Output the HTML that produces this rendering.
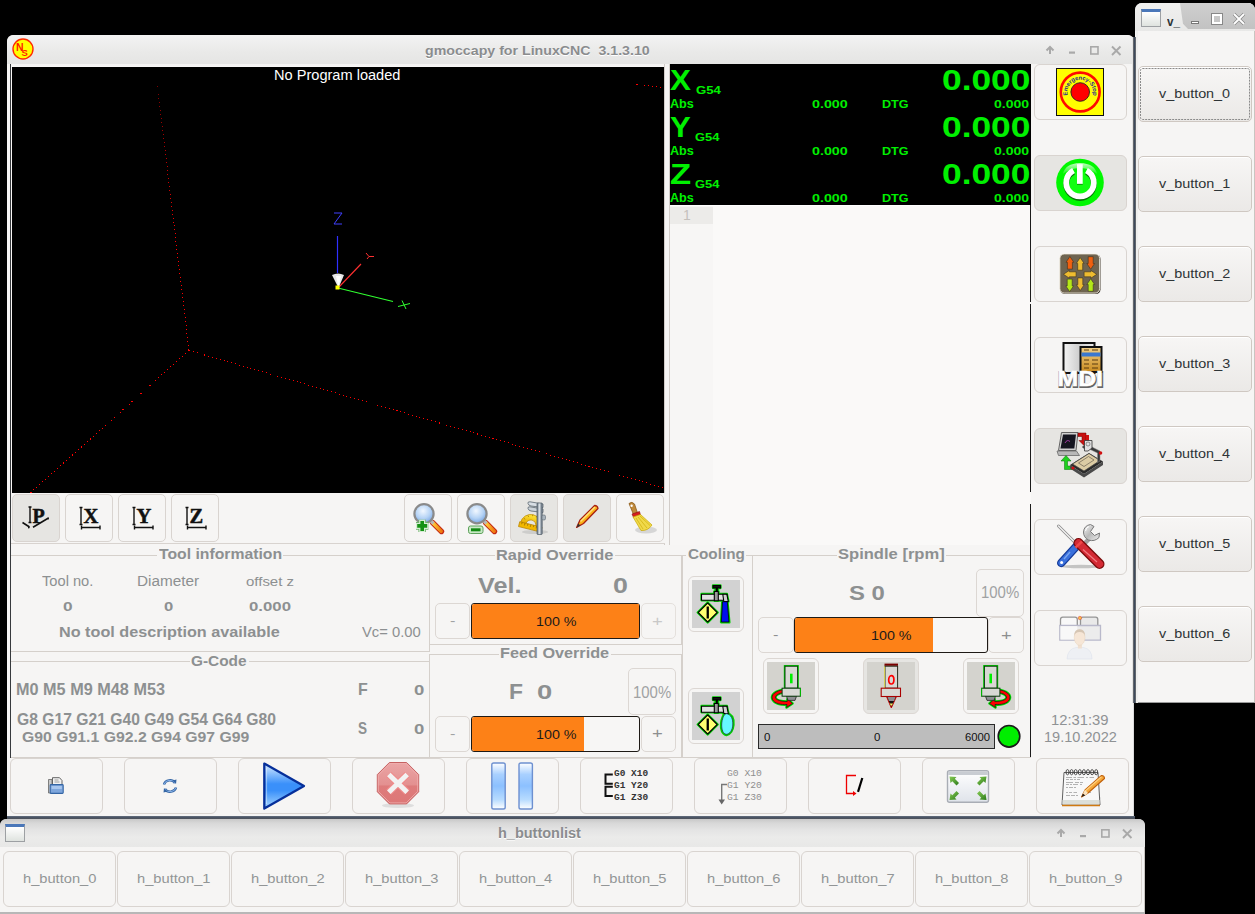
<!DOCTYPE html><html><head><meta charset="utf-8"><style>
html,body{margin:0;padding:0;width:1255px;height:914px;overflow:hidden;background:#000;position:relative;font-family:"Liberation Sans", sans-serif;}
div{box-sizing:border-box;}
.t{position:absolute;white-space:pre;transform-origin:0 0;}
svg{position:absolute;overflow:visible;}
</style></head><body>
<div style="position:absolute;left:1135px;top:3px;width:120px;height:700px;background:#f6f5f4;border-radius:7px 7px 0 0;border-right:1px solid #c9c5c1;border-bottom:1px solid #9a9a9a;"></div>
<div style="position:absolute;left:1135px;top:3px;width:120px;height:28px;background:linear-gradient(#f0f0ef,#e8e8e7);border-radius:7px 7px 0 0;"></div>
<div style="position:absolute;left:1180px;top:3px;width:75px;height:26px;background:linear-gradient(#cfcfcf,#c2c2c2);border-radius:0 7px 0 0;clip-path:polygon(0 0,100% 0,100% 100%,8px 100%,3px 80%);"></div>
<div style="position:absolute;left:1141px;top:9px;width:20px;height:18px;background:linear-gradient(#ffffff,#dfe3df);border:1px solid #9da0a3;border-top:3px solid #4a77b9;"></div>
<div class="t" style="left:1166.94px;top:16px;font-size:12.25px;line-height:12.25px;font-family:'Liberation Sans', sans-serif;font-weight:bold;color:#2e3436;transform:scaleX(0.9518);">v_</div>
<div style="position:absolute;left:1191px;top:21px;width:8px;height:3px;background:#fff;border:1px solid #777;"></div>
<div style="position:absolute;left:1212px;top:14px;width:10px;height:10px;border:2px solid #fff;outline:1px solid #888;"></div>
<svg style="left:1233px;top:13px" width="12" height="12"><path d="M1 1L11 11M11 1L1 11" stroke="#888" stroke-width="3.2"/><path d="M1 1L11 11M11 1L1 11" stroke="#fff" stroke-width="1.8"/></svg>
<div style="position:absolute;left:1138px;top:66px;width:114px;height:56px;background:linear-gradient(#f7f6f5,#ebe9e7);border:1px solid #cfc8c2;border-radius:5px;box-shadow:0 1px 0 #fff inset;"></div>
<div class="t" style="left:1159.46px;top:88px;font-size:12.75px;line-height:12.75px;font-family:'Liberation Sans', sans-serif;font-weight:normal;color:#2e3436;transform:scaleX(1.1267);">v_button_0</div>
<div style="position:absolute;left:1138px;top:156px;width:114px;height:56px;background:linear-gradient(#f7f6f5,#ebe9e7);border:1px solid #cfc8c2;border-radius:5px;box-shadow:0 1px 0 #fff inset;"></div>
<div class="t" style="left:1159.46px;top:178px;font-size:12.75px;line-height:12.75px;font-family:'Liberation Sans', sans-serif;font-weight:normal;color:#2e3436;transform:scaleX(1.1290);">v_button_1</div>
<div style="position:absolute;left:1138px;top:246px;width:114px;height:56px;background:linear-gradient(#f7f6f5,#ebe9e7);border:1px solid #cfc8c2;border-radius:5px;box-shadow:0 1px 0 #fff inset;"></div>
<div class="t" style="left:1159.46px;top:268px;font-size:12.75px;line-height:12.75px;font-family:'Liberation Sans', sans-serif;font-weight:normal;color:#2e3436;transform:scaleX(1.1296);">v_button_2</div>
<div style="position:absolute;left:1138px;top:336px;width:114px;height:56px;background:linear-gradient(#f7f6f5,#ebe9e7);border:1px solid #cfc8c2;border-radius:5px;box-shadow:0 1px 0 #fff inset;"></div>
<div class="t" style="left:1159.46px;top:358px;font-size:12.75px;line-height:12.75px;font-family:'Liberation Sans', sans-serif;font-weight:normal;color:#2e3436;transform:scaleX(1.1279);">v_button_3</div>
<div style="position:absolute;left:1138px;top:426px;width:114px;height:56px;background:linear-gradient(#f7f6f5,#ebe9e7);border:1px solid #cfc8c2;border-radius:5px;box-shadow:0 1px 0 #fff inset;"></div>
<div class="t" style="left:1159.46px;top:448px;font-size:12.75px;line-height:12.75px;font-family:'Liberation Sans', sans-serif;font-weight:normal;color:#2e3436;transform:scaleX(1.1244);">v_button_4</div>
<div style="position:absolute;left:1138px;top:516px;width:114px;height:56px;background:linear-gradient(#f7f6f5,#ebe9e7);border:1px solid #cfc8c2;border-radius:5px;box-shadow:0 1px 0 #fff inset;"></div>
<div class="t" style="left:1159.46px;top:538px;font-size:12.75px;line-height:12.75px;font-family:'Liberation Sans', sans-serif;font-weight:normal;color:#2e3436;transform:scaleX(1.1273);">v_button_5</div>
<div style="position:absolute;left:1138px;top:606px;width:114px;height:56px;background:linear-gradient(#f7f6f5,#ebe9e7);border:1px solid #cfc8c2;border-radius:5px;box-shadow:0 1px 0 #fff inset;"></div>
<div class="t" style="left:1159.46px;top:628px;font-size:12.75px;line-height:12.75px;font-family:'Liberation Sans', sans-serif;font-weight:normal;color:#2e3436;transform:scaleX(1.1279);">v_button_6</div>
<svg style="left:1138px;top:66px" width="114" height="56"><rect x="2.5" y="2.5" width="109" height="51" rx="2" fill="none" stroke="#8a8a8a" stroke-width="1" stroke-dasharray="2 1"/></svg>
<div style="position:absolute;left:7px;top:35px;width:1127px;height:784px;background:#f6f5f4;border-radius:7px 7px 0 0;"></div>
<div style="position:absolute;left:7px;top:35px;width:1127px;height:29px;background:linear-gradient(#f3f3f3,#e9e9e8 60%,#e5e5e4);border-radius:6px 6px 0 0;"></div>
<div style="position:absolute;left:7px;top:64px;width:1127px;height:2px;background:#f5f4f3;"></div>
<div style="position:absolute;left:1132px;top:37px;width:1px;height:666px;background:#e3e3e2;"></div>
<div style="position:absolute;left:1133px;top:37px;width:3px;height:666px;background:linear-gradient(90deg,#63666c 0,#63666c 33%,#3d4a5c 33%,#3d4a5c 66%,#62666c 66%);"></div>
<div style="position:absolute;left:1136px;top:31px;width:2px;height:672px;background:#efefee;"></div>
<div style="position:absolute;left:1133px;top:703px;width:1px;height:115px;background:#dcdcdc;"></div>
<div style="position:absolute;left:7px;top:816px;width:1128px;height:3px;background:linear-gradient(#6a7280,#4a5668 40%,#4e5158);"></div>
<div class="t" style="left:424.83px;top:44px;font-size:13.50px;line-height:13.50px;font-family:'Liberation Sans', sans-serif;font-weight:bold;color:#8a8c8e;transform:scaleX(1.0511);text-shadow:0 1px 0 #fff;">gmoccapy for LinuxCNC  3.1.3.10</div>
<svg style="left:12px;top:38px" width="22" height="22"><circle cx="11" cy="11" r="10" fill="#ffff00" stroke="#ff2a00" stroke-width="1.4"/><text x="4" y="13.2" font-family="Liberation Sans" font-weight="bold" font-size="10.5" fill="#ff1a00">N</text><text x="9.4" y="17.8" font-family="Liberation Sans" font-weight="bold" font-size="9.5" fill="#ff1a00">S</text></svg>
<svg style="left:1045px;top:45px" width="80" height="12"><path d="M5 9V2M1.5 5.5L5 2L8.5 5.5" stroke="#a9a9a9" stroke-width="2" fill="none"/><rect x="24" y="6.5" width="6" height="2.2" fill="#a9a9a9"/><rect x="45.8" y="1.8" width="7.2" height="7.2" stroke="#a9a9a9" stroke-width="1.6" fill="none"/><path d="M67 1.5L75.5 10M75.5 1.5L67 10" stroke="#a9a9a9" stroke-width="1.9"/></svg>
<div style="position:absolute;left:10px;top:64px;width:1px;height:694px;background:#373a3d;"></div>
<div style="position:absolute;left:11px;top:66px;width:654px;height:428px;background:#f8f7f6;"></div>
<div style="position:absolute;left:12px;top:67px;width:652px;height:426px;background:#000;"></div>
<div style="position:absolute;left:664px;top:64px;width:1px;height:481px;background:#d2cdc9;"></div>
<div style="position:absolute;left:669px;top:64px;width:1px;height:481px;background:#d2cdc9;"></div>
<svg style="left:12px;top:67px" width="652" height="426" viewBox="12 67 652 426"><defs><linearGradient id="fogv" x1="0" y1="86" x2="0" y2="350" gradientUnits="userSpaceOnUse"><stop offset="0" stop-color="#7a0000"/><stop offset="0.6" stop-color="#ff0000"/></linearGradient></defs><path d="M157.5 86.5L189 350.5" stroke="url(#fogv)" stroke-width="1" stroke-dasharray="1 3" fill="none" shape-rendering="crispEdges"/><path d="M189 350.5L28 495" stroke="#ff0000" stroke-width="1" stroke-dasharray="1 3" fill="none" shape-rendering="crispEdges"/><path d="M189 350.5L664 488" stroke="#ff0000" stroke-width="1" stroke-dasharray="1 3" fill="none" shape-rendering="crispEdges"/><path d="M636.5 84.5L664 87.5" stroke="#ff0000" stroke-width="1" stroke-dasharray="1 3" fill="none" shape-rendering="crispEdges"/><path d="M337.5 236V273" stroke="#3030ff" stroke-width="1.2"/><path d="M338 288L361 264" stroke="#ff3030" stroke-width="1.1"/><path d="M338 288L393 301.5" stroke="#30ff30" stroke-width="1.2"/><path d="M334 213H342L334 224H342" stroke="#4040ff" stroke-width="1" fill="none"/><path d="M366 253L369 256.5L367 259M369 256.5H374" stroke="#ff3030" stroke-width="1" fill="none"/><path d="M398 306.5L410 303.5M402 300.5L406 309" stroke="#30ff30" stroke-width="1" fill="none"/><path d="M332 275Q338 272 344 275L338.5 288Z" fill="#e8e8e8"/><path d="M336 276L338.5 288L341 276Z" fill="#ffffff"/><rect x="335.5" y="285.5" width="4" height="4" fill="#ffff00"/></svg>
<div class="t" style="left:274.40px;top:68px;font-size:14.00px;line-height:14.00px;font-family:'Liberation Sans', sans-serif;font-weight:normal;color:#ffffff;transform:scaleX(1.0415);">No Program loaded</div>
<div style="position:absolute;left:11px;top:493px;width:654px;height:51px;background:#f6f5f4;border-bottom:1px solid #d8d3cf;"></div>
<div style="position:absolute;left:12px;top:494px;width:48px;height:48px;background:#e6e5e2;border:1px solid #d9d4d0;border-radius:5px;"></div>
<div style="position:absolute;left:65px;top:494px;width:48px;height:48px;background:#f6f5f4;border:1px solid #d9d4d0;border-radius:5px;"></div>
<div style="position:absolute;left:118px;top:494px;width:48px;height:48px;background:#f6f5f4;border:1px solid #d9d4d0;border-radius:5px;"></div>
<div style="position:absolute;left:171px;top:494px;width:48px;height:48px;background:#f6f5f4;border:1px solid #d9d4d0;border-radius:5px;"></div>
<div style="position:absolute;left:404px;top:494px;width:48px;height:48px;background:#f6f5f4;border:1px solid #d9d4d0;border-radius:5px;"></div>
<div style="position:absolute;left:457px;top:494px;width:48px;height:48px;background:#f6f5f4;border:1px solid #d9d4d0;border-radius:5px;"></div>
<div style="position:absolute;left:510px;top:494px;width:48px;height:48px;background:#e6e5e2;border:1px solid #d9d4d0;border-radius:5px;"></div>
<div style="position:absolute;left:563px;top:494px;width:48px;height:48px;background:#e6e5e2;border:1px solid #d9d4d0;border-radius:5px;"></div>
<div style="position:absolute;left:616px;top:494px;width:48px;height:48px;background:#f6f5f4;border:1px solid #d9d4d0;border-radius:5px;"></div>
<svg style="left:12px;top:494px" width="48" height="48"><path d="M16.5 13H19.5M18 13V28.5M16.5 28.5H19.5" stroke="#111" stroke-width="1.4" fill="none"/><path d="M10.5 28.5L17.5 33M21 33.2L36.5 24" stroke="#111" stroke-width="1.6" fill="none"/><path d="M16 31.5L18 34L16 34.5Z M36.5 23L37 25.5L35 25Z" fill="#111"/><text x="20.5" y="29" font-family="'Liberation Serif', serif" font-weight="bold" font-size="20" fill="#111" stroke="#111" stroke-width="0.5">P</text></svg>
<svg style="left:65px;top:494px" width="48" height="48"><path d="M14.5 13.5H17.5M16 13.5V30.5M14.5 30.5H17.5" stroke="#111" stroke-width="1.4" fill="none"/><path d="M16.5 33.5H35M16.5 31.5V35.5M35 31.5V35.5" stroke="#111" stroke-width="1.4" fill="none"/><text x="18.6" y="29.3" font-family="'Liberation Serif', serif" font-weight="bold" font-size="20.5" fill="#111" stroke="#111" stroke-width="0.5">X</text></svg>
<svg style="left:118px;top:494px" width="48" height="48"><path d="M14.5 13.5H17.5M16 13.5V30.5M14.5 30.5H17.5" stroke="#111" stroke-width="1.4" fill="none"/><path d="M16.5 33.5H35M16.5 31.5V35.5M35 31.5V35.5" stroke="#111" stroke-width="1.4" fill="none"/><text x="18.6" y="29.3" font-family="'Liberation Serif', serif" font-weight="bold" font-size="20.5" fill="#111" stroke="#111" stroke-width="0.5">Y</text></svg>
<svg style="left:171px;top:494px" width="48" height="48"><path d="M14.5 13.5H17.5M16 13.5V30.5M14.5 30.5H17.5" stroke="#111" stroke-width="1.4" fill="none"/><path d="M16.5 33.5H35M16.5 31.5V35.5M35 31.5V35.5" stroke="#111" stroke-width="1.4" fill="none"/><text x="18.6" y="29.3" font-family="'Liberation Serif', serif" font-weight="bold" font-size="20.5" fill="#111" stroke="#111" stroke-width="0.5">Z</text></svg>
<svg style="left:404px;top:494px" width="48" height="48"><defs><radialGradient id="lens404" cx="0.45" cy="0.35" r="0.7"><stop offset="0" stop-color="#f2f8ff"/><stop offset="0.55" stop-color="#b5d3f5"/><stop offset="1" stop-color="#6d9ee0"/></radialGradient><linearGradient id="hdl404" x1="0" y1="0" x2="1" y2="0"><stop offset="0" stop-color="#ffd23a"/><stop offset="1" stop-color="#f07a10"/></linearGradient></defs><path d="M28.5 28.5L37.5 37.5" stroke="#c42a12" stroke-width="5.4" stroke-linecap="round"/><path d="M28.8 28.8L37.2 37.2" stroke="url(#hdl404)" stroke-width="3.4" stroke-linecap="round"/><path d="M26 26L29.5 29.5" stroke="#b8b8b8" stroke-width="3.2"/><circle cx="20" cy="19.8" r="9.6" fill="url(#lens404)" stroke="#8a8a8a" stroke-width="2.2"/><path d="M12 31.9H24.4M18.2 25.7V38.1" stroke="#6fb56c" stroke-width="7.6"/><path d="M12 31.9H24.4M18.2 25.7V38.1" stroke="#d5ecd3" stroke-width="6"/><path d="M13.2 31.9H23.2M18.2 26.9V36.9" stroke="#149214" stroke-width="3.6"/></svg>
<svg style="left:457px;top:494px" width="48" height="48"><defs><radialGradient id="lens457" cx="0.45" cy="0.35" r="0.7"><stop offset="0" stop-color="#f2f8ff"/><stop offset="0.55" stop-color="#b5d3f5"/><stop offset="1" stop-color="#6d9ee0"/></radialGradient><linearGradient id="hdl457" x1="0" y1="0" x2="1" y2="0"><stop offset="0" stop-color="#ffd23a"/><stop offset="1" stop-color="#f07a10"/></linearGradient></defs><path d="M28.5 28.5L37.5 37.5" stroke="#c42a12" stroke-width="5.4" stroke-linecap="round"/><path d="M28.8 28.8L37.2 37.2" stroke="url(#hdl457)" stroke-width="3.4" stroke-linecap="round"/><path d="M26 26L29.5 29.5" stroke="#b8b8b8" stroke-width="3.2"/><circle cx="20" cy="19.8" r="9.6" fill="url(#lens457)" stroke="#8a8a8a" stroke-width="2.2"/><rect x="11.5" y="32" width="14.5" height="7.5" rx="2" fill="#c9e8c6" stroke="#5ea35c" stroke-width="1"/><rect x="14" y="34.3" width="9.5" height="3" fill="#138a13"/></svg>
<svg style="left:510px;top:494px" width="48" height="48"><defs><linearGradient id="msy" x1="0" y1="0" x2="0" y2="1"><stop offset="0" stop-color="#ffe83a"/><stop offset="1" stop-color="#e6a800"/></linearGradient><linearGradient id="msg" x1="0" y1="0" x2="1" y2="0"><stop offset="0" stop-color="#5e6a76"/><stop offset="0.45" stop-color="#dfe5ea"/><stop offset="1" stop-color="#5e6a76"/></linearGradient></defs><ellipse cx="25" cy="38" rx="13" ry="2" fill="#bdbdbd" opacity="0.6"/><g transform="rotate(14 21 30)"><path d="M10.5 31A10.5 10.5 0 0 1 31.5 31H26A5 5 0 0 0 16 31Z" fill="url(#msy)" stroke="#c08c00" stroke-width="0.7"/><path d="M13 26L14 27M16 22.5L17 23.7M20.5 20.6L20.7 22M25 21L24.6 22.3M28.8 23.3L28 24.3" stroke="#a07000" stroke-width="0.7"/><rect x="9.5" y="30.5" width="23" height="5" fill="#f2b800" stroke="#b88400" stroke-width="0.7"/><path d="M12 30.5V32.5M15 30.5V33M18 30.5V32.5M21 30.5V33M24 30.5V32.5M27 30.5V33M30 30.5V32.5" stroke="#8a6000" stroke-width="0.6"/></g><path d="M18 9.5Q17.5 7.5 20 7.8L33 10V13.5L21 12Q18.5 11.5 18 9.5Z" fill="#d8dee4" stroke="#5a6670" stroke-width="0.8"/><path d="M18 14.5Q17.5 12.5 20 12.8L33 15V18.5L21 17Q18.5 16.5 18 14.5Z" fill="#ccd3d9" stroke="#5a6670" stroke-width="0.8"/><rect x="27" y="9" width="5.2" height="31.5" rx="0.8" fill="url(#msg)" stroke="#4e5a66" stroke-width="0.7"/><rect x="32" y="21" width="3.5" height="5" rx="1.5" fill="#a9b3bb" stroke="#5a6670" stroke-width="0.6"/></svg>
<svg style="left:563px;top:494px" width="48" height="48"><path d="M13.6 33.4L17 26L31.6 11.5Q34.5 11.5 35 14.5L20.5 29.5Z" fill="#fbb118" stroke="#a82010" stroke-width="1.3" stroke-linejoin="round"/><path d="M17.5 27.5L32 13" stroke="#ffe27a" stroke-width="1.5"/><path d="M13.6 33.4L15.3 29.6L17.4 31.6Z" fill="#333"/></svg>
<svg style="left:616px;top:494px" width="48" height="48"><ellipse cx="30" cy="36" rx="11" ry="3.5" fill="#c9c9c9" opacity="0.7"/><path d="M13 9.5Q16 7 18.5 10L21.5 19L17.5 20.5Z" fill="#c08a3a" stroke="#8b5a1a" stroke-width="0.8"/><circle cx="15.6" cy="11.8" r="1.2" fill="#fff"/><path d="M16 20L23.5 17.5L24.5 21L17.5 23.5Z" fill="#d41e1e" stroke="#8e0f0f" stroke-width="0.6"/><path d="M17 23L24.5 20.5L36 31Q32 37 25 36.5Z" fill="#f0d94a" stroke="#c9a700" stroke-width="0.7"/><path d="M20 24L27 35M22 23L31 34M24 22L34 31.5" stroke="#c9a700" stroke-width="0.6"/></svg>
<div style="position:absolute;left:670px;top:64px;width:361px;height:141px;background:#000;"></div>
<div class="t" style="left:670.29px;top:65px;font-size:29.75px;line-height:29.75px;font-family:'Liberation Sans', sans-serif;font-weight:bold;color:#00f000;transform:scaleX(1.0538);">X</div>
<div class="t" style="left:696.47px;top:84px;font-size:11.75px;line-height:11.75px;font-family:'Liberation Sans', sans-serif;font-weight:bold;color:#00f000;transform:scaleX(1.1209);">G54</div>
<div class="t" style="left:669.98px;top:98px;font-size:12.00px;line-height:12.00px;font-family:'Liberation Sans', sans-serif;font-weight:bold;color:#00f000;transform:scaleX(1.0517);">Abs</div>
<div class="t" style="left:942.39px;top:65px;font-size:29.50px;line-height:29.50px;font-family:'Liberation Sans', sans-serif;font-weight:bold;color:#00f000;transform:scaleX(1.1978);">0.000</div>
<div class="t" style="left:811.63px;top:99px;font-size:11.25px;line-height:11.25px;font-family:'Liberation Sans', sans-serif;font-weight:bold;color:#00f000;transform:scaleX(1.2696);">0.000</div>
<div class="t" style="left:882.45px;top:99px;font-size:11.50px;line-height:11.50px;font-family:'Liberation Sans', sans-serif;font-weight:bold;color:#00f000;transform:scaleX(1.0935);">DTG</div>
<div class="t" style="left:994.24px;top:99px;font-size:11.25px;line-height:11.25px;font-family:'Liberation Sans', sans-serif;font-weight:bold;color:#00f000;transform:scaleX(1.2476);">0.000</div>
<div class="t" style="left:670.05px;top:112px;font-size:29.75px;line-height:29.75px;font-family:'Liberation Sans', sans-serif;font-weight:bold;color:#00f000;transform:scaleX(1.0469);">Y</div>
<div class="t" style="left:695.18px;top:131px;font-size:11.75px;line-height:11.75px;font-family:'Liberation Sans', sans-serif;font-weight:bold;color:#00f000;transform:scaleX(1.1025);">G54</div>
<div class="t" style="left:669.98px;top:145px;font-size:12.00px;line-height:12.00px;font-family:'Liberation Sans', sans-serif;font-weight:bold;color:#00f000;transform:scaleX(1.0517);">Abs</div>
<div class="t" style="left:942.39px;top:112px;font-size:29.50px;line-height:29.50px;font-family:'Liberation Sans', sans-serif;font-weight:bold;color:#00f000;transform:scaleX(1.1978);">0.000</div>
<div class="t" style="left:811.63px;top:146px;font-size:11.25px;line-height:11.25px;font-family:'Liberation Sans', sans-serif;font-weight:bold;color:#00f000;transform:scaleX(1.2696);">0.000</div>
<div class="t" style="left:882.45px;top:146px;font-size:11.50px;line-height:11.50px;font-family:'Liberation Sans', sans-serif;font-weight:bold;color:#00f000;transform:scaleX(1.0935);">DTG</div>
<div class="t" style="left:994.24px;top:146px;font-size:11.25px;line-height:11.25px;font-family:'Liberation Sans', sans-serif;font-weight:bold;color:#00f000;transform:scaleX(1.2476);">0.000</div>
<div class="t" style="left:669.56px;top:159px;font-size:29.75px;line-height:29.75px;font-family:'Liberation Sans', sans-serif;font-weight:bold;color:#00f000;transform:scaleX(1.1620);">Z</div>
<div class="t" style="left:695.18px;top:178px;font-size:11.75px;line-height:11.75px;font-family:'Liberation Sans', sans-serif;font-weight:bold;color:#00f000;transform:scaleX(1.1025);">G54</div>
<div class="t" style="left:669.98px;top:192px;font-size:12.00px;line-height:12.00px;font-family:'Liberation Sans', sans-serif;font-weight:bold;color:#00f000;transform:scaleX(1.0517);">Abs</div>
<div class="t" style="left:942.39px;top:159px;font-size:29.50px;line-height:29.50px;font-family:'Liberation Sans', sans-serif;font-weight:bold;color:#00f000;transform:scaleX(1.1978);">0.000</div>
<div class="t" style="left:811.63px;top:193px;font-size:11.25px;line-height:11.25px;font-family:'Liberation Sans', sans-serif;font-weight:bold;color:#00f000;transform:scaleX(1.2696);">0.000</div>
<div class="t" style="left:882.45px;top:193px;font-size:11.50px;line-height:11.50px;font-family:'Liberation Sans', sans-serif;font-weight:bold;color:#00f000;transform:scaleX(1.0935);">DTG</div>
<div class="t" style="left:994.24px;top:193px;font-size:11.25px;line-height:11.25px;font-family:'Liberation Sans', sans-serif;font-weight:bold;color:#00f000;transform:scaleX(1.2476);">0.000</div>
<div style="position:absolute;left:670px;top:205px;width:361px;height:340px;background:#faf9f8;border-top:1px solid #ffffff;"></div>
<div style="position:absolute;left:670px;top:206px;width:43px;height:339px;background:#f7f6f5;"></div>
<div style="position:absolute;left:670px;top:207px;width:43px;height:17px;background:#ecebe9;"></div>
<div class="t" style="left:682.96px;top:208px;font-size:14.50px;line-height:14.50px;font-family:'Liberation Sans', sans-serif;font-weight:normal;color:#c4c0bc;transform:scaleX(0.9567);">1</div>
<div style="position:absolute;left:1034px;top:64px;width:93px;height:56px;background:#f6f5f4;border:1px solid #d9d4d0;border-radius:6px;"></div>
<div style="position:absolute;left:1034px;top:155px;width:93px;height:56px;background:#e6e5e2;border:1px solid #d9d4d0;border-radius:6px;"></div>
<div style="position:absolute;left:1034px;top:246px;width:93px;height:56px;background:#f6f5f4;border:1px solid #d9d4d0;border-radius:6px;"></div>
<div style="position:absolute;left:1034px;top:337px;width:93px;height:56px;background:#f6f5f4;border:1px solid #d9d4d0;border-radius:6px;"></div>
<div style="position:absolute;left:1034px;top:428px;width:93px;height:56px;background:#e6e5e2;border:1px solid #d9d4d0;border-radius:6px;"></div>
<div style="position:absolute;left:1034px;top:519px;width:93px;height:56px;background:#f6f5f4;border:1px solid #d9d4d0;border-radius:6px;"></div>
<div style="position:absolute;left:1034px;top:610px;width:93px;height:56px;background:#f6f5f4;border:1px solid #d9d4d0;border-radius:6px;"></div>
<svg style="left:1056px;top:68px" width="48" height="48"><defs><path id="arcE" d="M11.4 26.3A12.9 12.9 0 1 1 37 26.3"/></defs><rect x="0.5" y="0.5" width="47" height="47" fill="#ffff00" stroke="#111" stroke-width="1"/><circle cx="24.2" cy="24" r="19.4" fill="none" stroke="#ff0a00" stroke-width="2.6"/><circle cx="24.2" cy="24" r="9.3" fill="#ff0000" stroke="#222" stroke-width="0.9"/><text font-family="Liberation Sans" font-weight="bold" font-size="5.9" fill="#1e2890" letter-spacing="-0.1"><textPath href="#arcE" startOffset="50%" text-anchor="middle">Emergency-Stop</textPath></text></svg>
<svg style="left:1056px;top:158px" width="48" height="48"><defs><linearGradient id="pwh" x1="0" y1="0" x2="0" y2="1"><stop offset="0" stop-color="#ffffff" stop-opacity="0.75"/><stop offset="1" stop-color="#ffffff" stop-opacity="0.1"/></linearGradient></defs><circle cx="24" cy="24.5" r="23.8" fill="#00f800"/><circle cx="24" cy="24.7" r="11" fill="#10ff10"/><path d="M7 16Q9 5.5 24 5Q39 5.5 41 16Q34 10 24 10Q14 10 7 16Z" fill="url(#pwh)"/><path d="M17.5 12.5A13.8 13.8 0 1 0 30.5 12.5" fill="none" stroke="#0a4a0a" stroke-opacity="0.75" stroke-width="5.7" transform="translate(0 1.6)"/><path d="M17.5 12.5A13.8 13.8 0 1 0 30.5 12.5" fill="none" stroke="#ffffff" stroke-width="5.7"/><rect x="21" y="6.2" width="5.7" height="19.7" fill="#ffffff"/><rect x="21" y="25.9" width="5.7" height="1" fill="#0a5a0a" opacity="0.6"/></svg>
<svg style="left:1056px;top:249px" width="48" height="48"><rect x="4.3" y="5.4" width="40.2" height="39.6" rx="4.5" fill="#3a3226"/><rect x="3.8" y="4.9" width="39.8" height="39.2" rx="4.5" fill="#6e6450" stroke="#f6f2e6" stroke-width="0.9"/><path d="M-2.5 -0.5V6.3H2.5V-0.5H3.9L0 -6.3L-3.9 -0.5Z" transform="translate(13.9 13.8) rotate(0)" fill="#f06010" stroke="#3a3020" stroke-width="0.6" stroke-linejoin="round"/><path d="M-2.5 -0.5V6.3H2.5V-0.5H3.9L0 -6.3L-3.9 -0.5Z" transform="translate(24.2 14.9) rotate(0)" fill="#eebc30" stroke="#3a3020" stroke-width="0.6" stroke-linejoin="round"/><path d="M-2.5 -0.5V6.3H2.5V-0.5H3.9L0 -6.3L-3.9 -0.5Z" transform="translate(34.7 14) rotate(180)" fill="#f06010" stroke="#3a3020" stroke-width="0.6" stroke-linejoin="round"/><path d="M-2.5 -0.5V6.3H2.5V-0.5H3.9L0 -6.3L-3.9 -0.5Z" transform="translate(13.8 25.3) rotate(-90)" fill="#eebc30" stroke="#3a3020" stroke-width="0.6" stroke-linejoin="round"/><path d="M-2.5 -0.5V6.3H2.5V-0.5H3.9L0 -6.3L-3.9 -0.5Z" transform="translate(34.4 25.3) rotate(90)" fill="#eebc30" stroke="#3a3020" stroke-width="0.6" stroke-linejoin="round"/><path d="M-2.5 -0.5V6.3H2.5V-0.5H3.9L0 -6.3L-3.9 -0.5Z" transform="translate(13.7 36.4) rotate(180)" fill="#b4e818" stroke="#3a3020" stroke-width="0.6" stroke-linejoin="round"/><path d="M-2.5 -0.5V6.3H2.5V-0.5H3.9L0 -6.3L-3.9 -0.5Z" transform="translate(24.3 35.2) rotate(180)" fill="#eebc30" stroke="#3a3020" stroke-width="0.6" stroke-linejoin="round"/><path d="M-2.5 -0.5V6.3H2.5V-0.5H3.9L0 -6.3L-3.9 -0.5Z" transform="translate(34.7 36) rotate(0)" fill="#b4e818" stroke="#3a3020" stroke-width="0.6" stroke-linejoin="round"/></svg>
<svg style="left:1056px;top:340px" width="48" height="48"><defs><linearGradient id="mdg" x1="0" x2="1"><stop offset="0" stop-color="#f4f4f4"/><stop offset="0.5" stop-color="#cfcfcf"/><stop offset="1" stop-color="#f0f0f0"/></linearGradient><linearGradient id="mdo" x1="0" y1="0" x2="0" y2="1"><stop offset="0" stop-color="#f3d28a"/><stop offset="1" stop-color="#c98a1e"/></linearGradient></defs><rect x="7.5" y="3" width="31" height="30" fill="url(#mdg)" stroke="#111" stroke-width="2"/><rect x="24.5" y="7" width="21" height="25" fill="url(#mdo)" stroke="#111" stroke-width="2"/><rect x="25.5" y="12.5" width="19" height="4" fill="#3a78d0"/><path d="M28 10H33M36 10H42M28 20H33M36 20H42M28 24H33M36 24H42M28 28H33M36 28H42" stroke="#5a3a10" stroke-width="1"/><text x="1.5" y="45.8" font-family="Liberation Sans" font-weight="bold" font-size="22.5" fill="#2a2a2a" opacity="0.7" stroke="#2a2a2a" stroke-width="2" transform="translate(0.6 0.8)" textLength="45.5" lengthAdjust="spacingAndGlyphs">MDI</text><text x="1.5" y="45.8" font-family="Liberation Sans" font-weight="bold" font-size="22.5" fill="#ffffff" stroke="#ffffff" stroke-width="0.6" textLength="45.5" lengthAdjust="spacingAndGlyphs">MDI</text></svg>
<svg style="left:1056px;top:431px" width="48" height="48"><path d="M2.5 19.5L5.5 1.5H22L20 19.5Z" fill="#d0d0d0" stroke="#555" stroke-width="0.9"/><path d="M4.5 17.5L7 3.5H20L18.3 17.5Z" fill="#151520"/><path d="M9 12Q11 8 14 10.5" stroke="#b040b0" stroke-width="0.9" fill="none"/><path d="M1 20H20.5L23.5 24.5H2.5Z" fill="#b8b8b8" stroke="#6a6a6a" stroke-width="0.8"/><path d="M22 2H30V9.5H33L28 14.5L23 9.5H26V5.5H22Z" fill="#c81010" stroke="#6a0000" stroke-width="0.5"/><path d="M8.5 38.5V30H5L10 24.5L15 30H11.5V35H16V38.5Z" fill="#1ed01e" stroke="#067006" stroke-width="0.5"/><path d="M14 34L33 22L47 30.5L28 43Z" fill="#2a2a2a"/><path d="M14 34V37.5L28 46.5L47 34V30.5L28 43Z" fill="#4a4a4a"/><path d="M16.5 33L33 22.5L44 29.5L28 40Z" fill="#dccca4" stroke="#444" stroke-width="0.7"/><path d="M22.5 32L32.5 25.5L38 29L28 35.5Z" fill="none" stroke="#6a6050" stroke-width="0.7"/><path d="M26 16L30 13L44 20V30L41.5 31.5V22L30 16.5L28.5 18Z" fill="#3a3a3a" stroke="#888" stroke-width="0.5"/><path d="M28.5 9.5H36V17L32 20H28.5Z" fill="#e0e0e0" stroke="#333" stroke-width="0.8"/><circle cx="32" cy="13" r="2" fill="none" stroke="#555" stroke-width="0.6"/><rect x="30" y="4" width="3" height="5" fill="#d01010"/><circle cx="44.5" cy="22" r="1.8" fill="#d01010"/><circle cx="17" cy="37" r="1.6" fill="#d01010"/></svg>
<svg style="left:1056px;top:522px" width="48" height="48"><defs><linearGradient id="chr" x1="0" y1="0" x2="1" y2="1"><stop offset="0" stop-color="#f8f8f8"/><stop offset="0.5" stop-color="#b8b8b8"/><stop offset="1" stop-color="#eeeeee"/></linearGradient></defs><ellipse cx="25" cy="44.5" rx="20" ry="1.8" fill="#9a9a9a" opacity="0.55"/><path d="M2.5 4L21 22.5" stroke="#8a8a8a" stroke-width="3" stroke-linecap="round"/><path d="M2.5 4L21 22.5" stroke="#f4f4f4" stroke-width="1.4" stroke-linecap="round"/><path d="M36 14L25 25" stroke="#a0a0a0" stroke-width="4.5"/><path d="M34.5 2.5Q28 3.5 27.5 10Q27.5 15.5 32.5 18Q38.5 20 43 15.5L43.5 11L38.5 13.5L34.5 9.5L38 4.5Z" fill="url(#chr)" stroke="#7a7a7a" stroke-width="1"/><path d="M29.5 9Q30 5.5 33 4.5" stroke="#fff" stroke-width="1" fill="none"/><path d="M22 22.5L5.2 41" stroke="#143a98" stroke-width="8.4" stroke-linecap="round"/><path d="M22 22.5L5.2 41" stroke="#3a70dc" stroke-width="5.8" stroke-linecap="round"/><path d="M14 30L8 37" stroke="#7aa6f0" stroke-width="1.4"/><circle cx="5.6" cy="40.6" r="1.5" fill="#fff"/><path d="M22.5 21L43.5 42" stroke="#7a0c0c" stroke-width="10" stroke-linecap="round"/><path d="M22.5 21L43.5 42" stroke="#d42a34" stroke-width="7.4" stroke-linecap="round"/><path d="M27 27.5L41 40" stroke="#f07a80" stroke-width="1.2"/><path d="M19.5 25.5L26 19.5" stroke="#f04848" stroke-width="2.4"/></svg>
<svg style="left:1056px;top:612px" width="48" height="48"><path d="M4.5 14V7.5Q4.5 5.2 6.8 5.2H19Q21.3 5.2 21.3 7.5V14" fill="#f8f8f8" stroke="#959595" stroke-width="1.3"/><path d="M24.5 14V7.5Q24.5 5.2 26.8 5.2H39.5Q41.8 5.2 41.8 7.5V14" fill="#e9e9e9" stroke="#959595" stroke-width="1.3"/><path d="M3.8 13.5H44.5V28.2H3.8Z" fill="#ececec" stroke="#b9b9cb" stroke-width="1.3"/><path d="M4.5 14.2H21.3V27.5H4.5Z" fill="#f8f8f8"/><circle cx="23.9" cy="6" r="1.7" fill="#f5c040" stroke="#e05050" stroke-width="0.6"/><path d="M11 47Q11.5 37 20 35.5H27.5Q36 37 36 47Z" fill="#eef0f4" stroke="#dde2ec" stroke-width="0.6"/><rect x="21.9" y="31" width="4" height="5.5" fill="#f0e0d0"/><ellipse cx="23.6" cy="25.5" rx="5.4" ry="7.8" fill="#f6e6d6" stroke="#e6d2bc" stroke-width="0.5"/><path d="M18.2 24Q18 17.3 23.6 17.3Q29.2 17.3 29 24Q28 20 23.6 20Q19.2 20 18.2 24Z" fill="#d6c6b4"/></svg>
<div style="position:absolute;left:11px;top:555px;width:146px;height:1px;background:#d5d0cb;"></div>
<div style="position:absolute;left:283px;top:555px;width:147px;height:1px;background:#d5d0cb;"></div>
<div style="position:absolute;left:429px;top:555px;width:1px;height:97px;background:#d5d0cb;"></div>
<div style="position:absolute;left:11px;top:651px;width:419px;height:1px;background:#d5d0cb;"></div>
<div class="t" style="left:158.84px;top:547px;font-size:14.25px;line-height:14.25px;font-family:'Liberation Sans', sans-serif;font-weight:bold;color:#8d9091;transform:scaleX(1.1058);">Tool information</div>
<div class="t" style="left:41.67px;top:574px;font-size:14.25px;line-height:14.25px;font-family:'Liberation Sans', sans-serif;font-weight:normal;color:#8d9091;transform:scaleX(1.0288);">Tool no.</div>
<div class="t" style="left:137.34px;top:574px;font-size:14.25px;line-height:14.25px;font-family:'Liberation Sans', sans-serif;font-weight:normal;color:#8d9091;transform:scaleX(1.0739);">Diameter</div>
<div class="t" style="left:246.16px;top:575px;font-size:13.50px;line-height:13.50px;font-family:'Liberation Sans', sans-serif;font-weight:normal;color:#8d9091;transform:scaleX(1.1090);">offset z</div>
<div class="t" style="left:62.71px;top:600px;font-size:13.25px;line-height:13.25px;font-family:'Liberation Sans', sans-serif;font-weight:bold;color:#8d9091;transform:scaleX(1.3029);">0</div>
<div class="t" style="left:164.13px;top:600px;font-size:13.25px;line-height:13.25px;font-family:'Liberation Sans', sans-serif;font-weight:bold;color:#8d9091;transform:scaleX(1.2552);">0</div>
<div class="t" style="left:248.53px;top:600px;font-size:13.25px;line-height:13.25px;font-family:'Liberation Sans', sans-serif;font-weight:bold;color:#8d9091;transform:scaleX(1.2680);">0.000</div>
<div class="t" style="left:58.51px;top:625px;font-size:14.25px;line-height:14.25px;font-family:'Liberation Sans', sans-serif;font-weight:bold;color:#8d9091;transform:scaleX(1.1379);">No tool description available</div>
<div class="t" style="left:361.53px;top:625px;font-size:14.50px;line-height:14.50px;font-family:'Liberation Sans', sans-serif;font-weight:normal;color:#8d9091;transform:scaleX(1.0189);">Vc= 0.00</div>
<div style="position:absolute;left:11px;top:661px;width:179px;height:1px;background:#d5d0cb;"></div>
<div style="position:absolute;left:248.5px;top:661px;width:181.5px;height:1px;background:#d5d0cb;"></div>
<div style="position:absolute;left:429px;top:661px;width:1px;height:97px;background:#d5d0cb;"></div>
<div style="position:absolute;left:11px;top:757px;width:419px;height:1px;background:#d5d0cb;"></div>
<div class="t" style="left:191.48px;top:653px;font-size:15.00px;line-height:15.00px;font-family:'Liberation Sans', sans-serif;font-weight:bold;color:#8d9091;transform:scaleX(1.0252);">G-Code</div>
<div class="t" style="left:16.40px;top:682px;font-size:15.75px;line-height:15.75px;font-family:'Liberation Sans', sans-serif;font-weight:bold;color:#8d9091;transform:scaleX(1.0317);">M0 M5 M9 M48 M53</div>
<div class="t" style="left:358.32px;top:682px;font-size:15.75px;line-height:15.75px;font-family:'Liberation Sans', sans-serif;font-weight:bold;color:#8d9091;transform:scaleX(1.0134);">F</div>
<div class="t" style="left:413.66px;top:682px;font-size:15.50px;line-height:15.50px;font-family:'Liberation Sans', sans-serif;font-weight:bold;color:#8d9091;transform:scaleX(1.1952);">0</div>
<div class="t" style="left:16.87px;top:712px;font-size:15.75px;line-height:15.75px;font-family:'Liberation Sans', sans-serif;font-weight:bold;color:#8d9091;transform:scaleX(0.9959);">G8 G17 G21 G40 G49 G54 G64 G80</div>
<div class="t" style="left:22.17px;top:729px;font-size:15.50px;line-height:15.50px;font-family:'Liberation Sans', sans-serif;font-weight:bold;color:#8d9091;transform:scaleX(1.0189);">G90 G91.1 G92.2 G94 G97 G99</div>
<div class="t" style="left:357.89px;top:721px;font-size:15.75px;line-height:15.75px;font-family:'Liberation Sans', sans-serif;font-weight:bold;color:#8d9091;transform:scaleX(0.8607);">S</div>
<div class="t" style="left:413.66px;top:721px;font-size:15.50px;line-height:15.50px;font-family:'Liberation Sans', sans-serif;font-weight:bold;color:#8d9091;transform:scaleX(1.1952);">0</div>
<div style="position:absolute;left:429px;top:555px;width:66px;height:1px;background:#d5d0cb;"></div>
<div style="position:absolute;left:615px;top:555px;width:67px;height:1px;background:#d5d0cb;"></div>
<div style="position:absolute;left:429px;top:555px;width:1px;height:90px;background:#d5d0cb;"></div>
<div style="position:absolute;left:681px;top:555px;width:1px;height:90px;background:#d5d0cb;"></div>
<div style="position:absolute;left:429px;top:644px;width:253px;height:1px;background:#d5d0cb;"></div>
<div class="t" style="left:496.09px;top:548px;font-size:14.50px;line-height:14.50px;font-family:'Liberation Sans', sans-serif;font-weight:bold;color:#8d9091;transform:scaleX(1.1290);">Rapid Override</div>
<div class="t" style="left:478.01px;top:576px;font-size:21.50px;line-height:21.50px;font-family:'Liberation Sans', sans-serif;font-weight:bold;color:#8d9091;transform:scaleX(1.1716);">Vel.</div>
<div class="t" style="left:612.63px;top:576px;font-size:21.25px;line-height:21.25px;font-family:'Liberation Sans', sans-serif;font-weight:bold;color:#8d9091;transform:scaleX(1.2582);">0</div>
<div style="position:absolute;left:435px;top:603px;width:35px;height:36px;background:#f6f5f4;border:1px solid #dcd7d3;border-radius:5px;"></div>
<div class="t" style="left:449.77px;top:614px;font-size:13.00px;line-height:13.00px;font-family:'Liberation Sans', sans-serif;font-weight:normal;color:#a0a2a3;transform:scaleX(1.2559);">-</div>
<div style="position:absolute;left:471px;top:603px;width:169px;height:36px;background:#f7f6f5;border:1px solid #1e1a16;border-radius:3px;overflow:hidden;"></div>
<div style="position:absolute;left:472px;top:604px;width:167px;height:34px;background:#fd8117;border-radius:2px 0 0 2px;"></div>
<div class="t" style="left:536.23px;top:616px;font-size:12.75px;line-height:12.75px;font-family:'Liberation Sans', sans-serif;font-weight:normal;color:#1a1a1a;transform:scaleX(1.1215);">100 %</div>
<div style="position:absolute;left:641px;top:603px;width:35px;height:36px;background:#f6f5f4;border:1px solid #e4e0dc;border-radius:5px;"></div>
<div class="t" style="left:652.12px;top:613px;font-size:15.50px;line-height:15.50px;font-family:'Liberation Sans', sans-serif;font-weight:normal;color:#c8c8c8;transform:scaleX(1.1911);">+</div>
<div style="position:absolute;left:429px;top:654px;width:70px;height:1px;background:#d5d0cb;"></div>
<div style="position:absolute;left:611px;top:654px;width:71px;height:1px;background:#d5d0cb;"></div>
<div style="position:absolute;left:429px;top:654px;width:1px;height:104px;background:#d5d0cb;"></div>
<div style="position:absolute;left:681px;top:654px;width:1px;height:104px;background:#d5d0cb;"></div>
<div style="position:absolute;left:429px;top:757px;width:253px;height:1px;background:#d5d0cb;"></div>
<div class="t" style="left:500.20px;top:646px;font-size:14.50px;line-height:14.50px;font-family:'Liberation Sans', sans-serif;font-weight:bold;color:#8d9091;transform:scaleX(1.1191);">Feed Override</div>
<div class="t" style="left:509.26px;top:682px;font-size:21.25px;line-height:21.25px;font-family:'Liberation Sans', sans-serif;font-weight:bold;color:#8d9091;transform:scaleX(1.0756);">F</div>
<div class="t" style="left:537.31px;top:682px;font-size:20.75px;line-height:20.75px;font-family:'Liberation Sans', sans-serif;font-weight:bold;color:#8d9091;transform:scaleX(1.3190);">0</div>
<div style="position:absolute;left:628px;top:668px;width:48px;height:47px;background:#f6f5f4;border:1px solid #dcd7d3;border-radius:5px;"></div>
<div class="t" style="left:632.88px;top:685px;font-size:15.75px;line-height:15.75px;font-family:'Liberation Sans', sans-serif;font-weight:normal;color:#a0a2a3;transform:scaleX(0.9469);">100%</div>
<div style="position:absolute;left:435px;top:716px;width:35px;height:36px;background:#f6f5f4;border:1px solid #dcd7d3;border-radius:5px;"></div>
<div class="t" style="left:449.77px;top:727px;font-size:13.00px;line-height:13.00px;font-family:'Liberation Sans', sans-serif;font-weight:normal;color:#a0a2a3;transform:scaleX(1.2559);">-</div>
<div style="position:absolute;left:471px;top:716px;width:169px;height:36px;background:#f7f6f5;border:1px solid #1e1a16;border-radius:3px;overflow:hidden;"></div>
<div style="position:absolute;left:472px;top:717px;width:111.5px;height:34px;background:#fd8117;border-radius:2px 0 0 2px;"></div>
<div class="t" style="left:536.23px;top:729px;font-size:12.75px;line-height:12.75px;font-family:'Liberation Sans', sans-serif;font-weight:normal;color:#1a1a1a;transform:scaleX(1.1215);">100 %</div>
<div style="position:absolute;left:641px;top:716px;width:35px;height:36px;background:#f6f5f4;border:1px solid #dcd7d3;border-radius:5px;"></div>
<div class="t" style="left:652.12px;top:725px;font-size:15.50px;line-height:15.50px;font-family:'Liberation Sans', sans-serif;font-weight:normal;color:#8d8f90;transform:scaleX(1.1911);">+</div>
<div style="position:absolute;left:682px;top:555px;width:4px;height:1px;background:#d5d0cb;"></div>
<div style="position:absolute;left:746px;top:555px;width:7px;height:1px;background:#d5d0cb;"></div>
<div style="position:absolute;left:682px;top:555px;width:1px;height:203px;background:#d5d0cb;"></div>
<div style="position:absolute;left:752px;top:555px;width:1px;height:203px;background:#d5d0cb;"></div>
<div style="position:absolute;left:682px;top:757px;width:71px;height:1px;background:#d5d0cb;"></div>
<div class="t" style="left:688.09px;top:548px;font-size:13.75px;line-height:13.75px;font-family:'Liberation Sans', sans-serif;font-weight:bold;color:#8d9091;transform:scaleX(1.1105);">Cooling</div>
<div style="position:absolute;left:688px;top:576px;width:56px;height:56px;background:#f6f5f4;border:1px solid #dcd7d3;border-radius:6px;"></div>
<div style="position:absolute;left:688px;top:688px;width:56px;height:56px;background:#f6f5f4;border:1px solid #dcd7d3;border-radius:6px;"></div>
<div style="position:absolute;left:752px;top:555px;width:84.70000000000005px;height:1px;background:#d5d0cb;"></div>
<div style="position:absolute;left:946px;top:555px;width:85px;height:1px;background:#d5d0cb;"></div>
<div style="position:absolute;left:752px;top:555px;width:1px;height:203px;background:#d5d0cb;"></div>
<div style="position:absolute;left:1030px;top:555px;width:1px;height:203px;background:#d5d0cb;"></div>
<div style="position:absolute;left:752px;top:757px;width:279px;height:1px;background:#d5d0cb;"></div>
<div class="t" style="left:838.20px;top:547px;font-size:14.75px;line-height:14.75px;font-family:'Liberation Sans', sans-serif;font-weight:bold;color:#8d9091;transform:scaleX(1.1225);">Spindle [rpm]</div>
<div class="t" style="left:848.88px;top:582px;font-size:21.00px;line-height:21.00px;font-family:'Liberation Sans', sans-serif;font-weight:bold;color:#8d9091;transform:scaleX(1.1389);">S 0</div>
<div style="position:absolute;left:976px;top:569px;width:48px;height:48px;background:#f6f5f4;border:1px solid #dcd7d3;border-radius:5px;"></div>
<div class="t" style="left:980.88px;top:585px;font-size:15.75px;line-height:15.75px;font-family:'Liberation Sans', sans-serif;font-weight:normal;color:#a0a2a3;transform:scaleX(0.9469);">100%</div>
<div style="position:absolute;left:758px;top:617px;width:36px;height:36px;background:#f6f5f4;border:1px solid #dcd7d3;border-radius:5px;"></div>
<div class="t" style="left:772.77px;top:628px;font-size:13.00px;line-height:13.00px;font-family:'Liberation Sans', sans-serif;font-weight:normal;color:#8d8f90;transform:scaleX(1.2559);">-</div>
<div style="position:absolute;left:794px;top:617px;width:194px;height:36px;background:#f7f6f5;border:1px solid #1e1a16;border-radius:3px;overflow:hidden;"></div>
<div style="position:absolute;left:795px;top:618px;width:138px;height:34px;background:#fd8117;border-radius:2px 0 0 2px;"></div>
<div class="t" style="left:871.33px;top:630px;font-size:12.75px;line-height:12.75px;font-family:'Liberation Sans', sans-serif;font-weight:normal;color:#1a1a1a;transform:scaleX(1.1215);">100 %</div>
<div style="position:absolute;left:988px;top:617px;width:36px;height:36px;background:#f6f5f4;border:1px solid #dcd7d3;border-radius:5px;"></div>
<div class="t" style="left:1000.62px;top:627px;font-size:15.50px;line-height:15.50px;font-family:'Liberation Sans', sans-serif;font-weight:normal;color:#8d8f90;transform:scaleX(1.1911);">+</div>
<div style="position:absolute;left:763px;top:658px;width:56px;height:56px;background:#f6f5f4;border:1px solid #dcd7d3;border-radius:6px;"></div>
<div style="position:absolute;left:863px;top:658px;width:56px;height:56px;background:#e6e5e2;border:1px solid #dcd7d3;border-radius:6px;"></div>
<div style="position:absolute;left:963px;top:658px;width:56px;height:56px;background:#f6f5f4;border:1px solid #dcd7d3;border-radius:6px;"></div>
<div style="position:absolute;left:758px;top:724px;width:237px;height:25px;background:#bdbdbd;border:1px solid #2a2a2a;"></div>
<div class="t" style="left:763.54px;top:733px;font-size:10.25px;line-height:10.25px;font-family:'Liberation Sans', sans-serif;font-weight:normal;color:#111;transform:scaleX(1.1237);">0</div>
<div class="t" style="left:874.34px;top:733px;font-size:10.25px;line-height:10.25px;font-family:'Liberation Sans', sans-serif;font-weight:normal;color:#111;transform:scaleX(1.1237);">0</div>
<div class="t" style="left:964.54px;top:733px;font-size:10.25px;line-height:10.25px;font-family:'Liberation Sans', sans-serif;font-weight:normal;color:#111;transform:scaleX(1.1013);">6000</div>
<svg style="left:997px;top:724px" width="24" height="24"><circle cx="12" cy="12.3" r="10.8" fill="#00ee00" stroke="#1a1a1a" stroke-width="1.6"/></svg>
<div style="position:absolute;left:1030px;top:205px;width:1px;height:97px;background:#1b1b1b;"></div>
<div style="position:absolute;left:1030px;top:304px;width:1px;height:188px;background:#1b1b1b;"></div>
<div style="position:absolute;left:1030px;top:504px;width:1px;height:253px;background:#1b1b1b;"></div>
<svg style="left:692px;top:580px" width="48" height="48"><rect x="0" y="0" width="48" height="48" fill="#d2d2d2"/><g stroke="#00d000" stroke-width="2.3" stroke-linejoin="round"><path d="M21 5.5H28.5V8H26V11.5H26.5V14H35V14.5L36.5 21.5H31V20.5H26.3V20.8H22.3V20.3H9.5V14H22.3V11.5H23.5V8H21Z" fill="#00c800"/><path d="M15.7 22.5L25.7 32.5L15.7 42.5L5.7 32.5Z" fill="#00c800"/><path d="M30.2 21.7H35.5L37.4 42.3H29Z" fill="#00c800"/></g><g stroke="#000" stroke-width="1.1" stroke-linejoin="round"><path d="M21 5.5H28.5V8H21Z" fill="#111"/><path d="M24.3 8H25.3V11.5H24.3Z" fill="#111"/><path d="M9.5 14.2H35V20.3H9.5Z" fill="#e2e2e2"/><path d="M30.8 14.2H34.8L36.3 21.5H31.8Z" fill="#d0d0d0"/><path d="M22.3 11.5H26.3V20.8H22.3Z" fill="#9a9a9a"/><path d="M15.7 23L25.2 32.5L15.7 42L6.2 32.5Z" fill="#ffff70"/></g><rect x="14.6" y="26.5" width="2.3" height="12" fill="#000"/><path d="M30.5 21.7H35.3L37 42H29.3Z" fill="#0010ee" stroke="#000" stroke-width="0.8"/></svg>
<svg style="left:692px;top:692px" width="48" height="48"><rect x="0" y="0" width="48" height="48" fill="#d2d2d2"/><g stroke="#00d000" stroke-width="2.3" stroke-linejoin="round"><path d="M21 5.5H28.5V8H26V11.5H26.5V14H35V14.5L36.5 21.5H31V20.5H26.3V20.8H22.3V20.3H9.5V14H22.3V11.5H23.5V8H21Z" fill="#00c800"/><path d="M15.7 22.5L25.7 32.5L15.7 42.5L5.7 32.5Z" fill="#00c800"/><path d="M34 21C40 22 42 27 41.5 33C41 38 38.5 42.5 34.5 43C30.5 42.5 28.5 38 29 32C29.5 27 31 22.5 34 21Z" fill="#00c800"/></g><g stroke="#000" stroke-width="1.1" stroke-linejoin="round"><path d="M21 5.5H28.5V8H21Z" fill="#111"/><path d="M24.3 8H25.3V11.5H24.3Z" fill="#111"/><path d="M9.5 14.2H35V20.3H9.5Z" fill="#e2e2e2"/><path d="M30.8 14.2H34.8L36.3 21.5H31.8Z" fill="#d0d0d0"/><path d="M22.3 11.5H26.3V20.8H22.3Z" fill="#9a9a9a"/><path d="M15.7 23L25.2 32.5L15.7 42L6.2 32.5Z" fill="#ffff70"/></g><rect x="14.6" y="26.5" width="2.3" height="12" fill="#000"/><path d="M34 21.5C39.5 22.5 41 27 40.8 33C40.5 38 38 42 34.5 42.3C31 42 29.5 38 29.7 32C30 27 31.5 23 34 21.5Z" fill="#66f8ff" stroke="#204040" stroke-width="0.8"/></svg>
<svg style="left:767px;top:662px" width="48" height="48"><rect x="0" y="0" width="48" height="48" fill="#d4d3ce"/><g><path d="M18 27.5C8 28.5 3.5 33 5.5 37.5C7.5 41.5 14 43 20 42.5L19.5 45.5L25.5 41.5L20.5 37L20.2 39.5C14 39.5 9.5 38 8.5 36C8 33.5 11.5 31 18 30.5Z" fill="#ff0000" stroke="#00e000" stroke-width="2.6" stroke-linejoin="round"/><path d="M18 27.5C8 28.5 3.5 33 5.5 37.5C7.5 41.5 14 43 20 42.5L19.5 45.5L25.5 41.5L20.5 37L20.2 39.5C14 39.5 9.5 38 8.5 36C8 33.5 11.5 31 18 30.5Z" fill="#ff0000" stroke="#111" stroke-width="0.7" stroke-linejoin="round"/><rect x="18" y="4.2" width="12.6" height="22" fill="#d8d8d4" stroke="#00d000" stroke-width="2.4"/><rect x="18" y="4.2" width="12.6" height="22" fill="#d8d8d4" stroke="#0a3a0a" stroke-width="1"/><rect x="23" y="11.7" width="2.6" height="9.6" fill="#00f000"/><path d="M19.5 34.2H29.5L28 38.4H21Z" fill="#8e8e92" stroke="#222" stroke-width="0.8"/><rect x="15.1" y="26.2" width="18.3" height="8" fill="#d8d8d4" stroke="#0a3a0a" stroke-width="1"/><path d="M33.4 26.2V34.2" stroke="#00c000" stroke-width="1"/></g></svg>
<svg style="left:867px;top:662px" width="48" height="48"><rect x="0" y="0" width="48" height="48" fill="#d4d3ce"/><g><rect x="17.5" y="1.6" width="13.5" height="2.2" fill="#7a0000"/><rect x="18" y="4.2" width="12.6" height="22" fill="#d8d8d4" stroke="#2a2a1a" stroke-width="1"/><path d="M17.6 4.5V26" stroke="#e8e050" stroke-width="0.9"/><ellipse cx="24.3" cy="17.8" rx="2.6" ry="4.2" fill="none" stroke="#ff0000" stroke-width="1.7"/><path d="M19.5 34.5H29.5L24.3 46Z" fill="#111" stroke="#cc0000" stroke-width="0.9"/><path d="M20.5 35H28.5L27 39H22Z" fill="#8e8e92"/><path d="M22.5 41.5H26L24.3 44Z" fill="#f0f060"/><rect x="14.2" y="26.2" width="19.3" height="8.3" fill="#d8d8d4" stroke="#aa0000" stroke-width="1.1"/></g></svg>
<svg style="left:967px;top:662px" width="48" height="48"><rect x="0" y="0" width="48" height="48" fill="#d4d3ce"/><g transform="translate(48 0) scale(-1 1)"><path d="M18 27.5C8 28.5 3.5 33 5.5 37.5C7.5 41.5 14 43 20 42.5L19.5 45.5L25.5 41.5L20.5 37L20.2 39.5C14 39.5 9.5 38 8.5 36C8 33.5 11.5 31 18 30.5Z" fill="#ff0000" stroke="#00e000" stroke-width="2.6" stroke-linejoin="round"/><path d="M18 27.5C8 28.5 3.5 33 5.5 37.5C7.5 41.5 14 43 20 42.5L19.5 45.5L25.5 41.5L20.5 37L20.2 39.5C14 39.5 9.5 38 8.5 36C8 33.5 11.5 31 18 30.5Z" fill="#ff0000" stroke="#111" stroke-width="0.7" stroke-linejoin="round"/><rect x="18" y="4.2" width="12.6" height="22" fill="#d8d8d4" stroke="#00d000" stroke-width="2.4"/><rect x="18" y="4.2" width="12.6" height="22" fill="#d8d8d4" stroke="#0a3a0a" stroke-width="1"/><rect x="23" y="11.7" width="2.6" height="9.6" fill="#00f000"/><path d="M19.5 34.2H29.5L28 38.4H21Z" fill="#8e8e92" stroke="#222" stroke-width="0.8"/><rect x="15.1" y="26.2" width="18.3" height="8" fill="#d8d8d4" stroke="#0a3a0a" stroke-width="1"/><path d="M33.4 26.2V34.2" stroke="#00c000" stroke-width="1"/></g></svg>
<div style="position:absolute;left:11px;top:757px;width:1019px;height:1px;background:#d5d0cb;"></div>
<div style="position:absolute;left:10px;top:758px;width:93px;height:56px;background:#f6f5f4;border:1px solid #d9d4d0;border-radius:6px;"></div>
<div style="position:absolute;left:124px;top:758px;width:93px;height:56px;background:#f6f5f4;border:1px solid #d9d4d0;border-radius:6px;"></div>
<div style="position:absolute;left:238px;top:758px;width:93px;height:56px;background:#f6f5f4;border:1px solid #d9d4d0;border-radius:6px;"></div>
<div style="position:absolute;left:352px;top:758px;width:93px;height:56px;background:#f6f5f4;border:1px solid #d9d4d0;border-radius:6px;"></div>
<div style="position:absolute;left:466px;top:758px;width:93px;height:56px;background:#f6f5f4;border:1px solid #d9d4d0;border-radius:6px;"></div>
<div style="position:absolute;left:580px;top:758px;width:93px;height:56px;background:#f6f5f4;border:1px solid #d9d4d0;border-radius:6px;"></div>
<div style="position:absolute;left:694px;top:758px;width:93px;height:56px;background:#f6f5f4;border:1px solid #d9d4d0;border-radius:6px;"></div>
<div style="position:absolute;left:808px;top:758px;width:93px;height:56px;background:#f6f5f4;border:1px solid #d9d4d0;border-radius:6px;"></div>
<div style="position:absolute;left:922px;top:758px;width:93px;height:56px;background:#f6f5f4;border:1px solid #d9d4d0;border-radius:6px;"></div>
<div style="position:absolute;left:1036px;top:758px;width:93px;height:56px;background:#f6f5f4;border:1px solid #d9d4d0;border-radius:6px;"></div>
<svg style="left:47px;top:777px" width="18" height="18"><path d="M1.5 2.5H5V16H1.5Z" fill="#c8c8c8" stroke="#666" stroke-width="0.8"/><path d="M5.5 0.7H12.5L15 3.5V8H5.5Z" fill="#f2f2f2" stroke="#555" stroke-width="0.9"/><path d="M7.5 3H11.5M7.5 5H12.5" stroke="#888" stroke-width="0.8"/><rect x="3.2" y="7.6" width="13" height="8.8" rx="0.8" fill="#7ea6dc" stroke="#3465a4" stroke-width="1.1"/><rect x="4.6" y="9" width="10.2" height="3" fill="#a8c6ee"/></svg>
<svg style="left:161px;top:777px" width="18" height="18"><path d="M3 7.5A6 5.5 0 0 1 14 6" stroke="#3465a4" stroke-width="2.4" fill="none"/><path d="M3 7.5A6 5.5 0 0 1 14 6" stroke="#8ab4ea" stroke-width="1" fill="none"/><path d="M11.5 3.5L15.5 2.5L15 7Z" fill="#3465a4"/><path d="M15 10.5A6 5.5 0 0 1 4 12" stroke="#3465a4" stroke-width="2.4" fill="none"/><path d="M15 10.5A6 5.5 0 0 1 4 12" stroke="#8ab4ea" stroke-width="1" fill="none"/><path d="M6.5 14.5L2.5 15.5L3 11Z" fill="#3465a4"/></svg>
<svg style="left:260px;top:760px" width="48" height="52"><defs><linearGradient id="plg" x1="0" y1="0" x2="0" y2="1"><stop offset="0" stop-color="#d8ecff"/><stop offset="0.45" stop-color="#3a90fa"/><stop offset="0.6" stop-color="#3a90fa"/><stop offset="1" stop-color="#aad8ff"/></linearGradient></defs><path d="M4.3 3.6L44 26L4.3 48.6Z" fill="url(#plg)" stroke="#062f9a" stroke-width="2.3" stroke-linejoin="round"/><path d="M6.5 8L6.5 44" stroke="#ffffff" stroke-opacity="0.4" stroke-width="1.2"/></svg>
<svg style="left:374px;top:760px" width="48" height="50"><defs><linearGradient id="stg" x1="0" y1="0" x2="0" y2="1"><stop offset="0" stop-color="#eba5a5"/><stop offset="0.55" stop-color="#e39090"/><stop offset="0.56" stop-color="#de7c7c"/><stop offset="1" stop-color="#dd7777"/></linearGradient></defs><ellipse cx="24" cy="45.5" rx="16" ry="2.5" fill="#d8d8d8" opacity="0.8"/><path d="M15.4 2.5H32.6L44.7 14.6V31.8L32.6 43.9H15.4L3.3 31.8V14.6Z" fill="url(#stg)" stroke="#c56262" stroke-width="1"/><path d="M15.9 3.5H32.1L43.7 15.1V31.3L32.1 42.9H15.9L4.3 31.3V15.1Z" fill="none" stroke="#f0b0b0" stroke-width="0.8"/><path d="M14.8 14.5L33.2 32.2M33.2 14.5L14.8 32.2" stroke="#f08a8a" stroke-width="7.2"/><path d="M14.8 14.5L33.2 32.2M33.2 14.5L14.8 32.2" stroke="#f2f2f2" stroke-width="5"/></svg>
<svg style="left:489px;top:760px" width="48" height="52"><defs><linearGradient id="pag" x1="0" y1="0" x2="0" y2="1"><stop offset="0" stop-color="#ffffff"/><stop offset="0.25" stop-color="#a8d0ff"/><stop offset="0.5" stop-color="#8cc0ff"/><stop offset="0.8" stop-color="#b8dcff"/><stop offset="1" stop-color="#ffffff"/></linearGradient></defs><rect x="2.8" y="3" width="13.4" height="46" rx="1.8" fill="url(#pag)" stroke="#6d90d0" stroke-width="1.4"/><rect x="30" y="3" width="13.4" height="46" rx="1.8" fill="url(#pag)" stroke="#6d90d0" stroke-width="1.4"/></svg>
<svg style="left:600px;top:768px" width="12" height="34"><path d="M12.8 6.5H5.5V15.7H12.8M12.8 18.7H5.5V27.9H12.8" stroke="#111" stroke-width="2" fill="none"/></svg>
<div class="t" style="left:613.52px;top:770px;font-size:9.00px;line-height:9.00px;font-family:'Liberation Mono', monospace;font-weight:bold;color:#333;transform:scaleX(1.0532);">G0 X10</div>
<div class="t" style="left:613.52px;top:782px;font-size:9.00px;line-height:9.00px;font-family:'Liberation Mono', monospace;font-weight:bold;color:#333;transform:scaleX(1.0532);">G1 Y20</div>
<div class="t" style="left:613.52px;top:793px;font-size:9.50px;line-height:9.50px;font-family:'Liberation Mono', monospace;font-weight:bold;color:#333;transform:scaleX(0.9978);">G1 Z30</div>
<div class="t" style="left:727.07px;top:770px;font-size:9.00px;line-height:9.00px;font-family:'Liberation Mono', monospace;font-weight:normal;color:#8f8f8f;transform:scaleX(1.0776);">G0 X10</div>
<div class="t" style="left:727.07px;top:782px;font-size:9.00px;line-height:9.00px;font-family:'Liberation Mono', monospace;font-weight:normal;color:#8f8f8f;transform:scaleX(1.0776);">G1 Y20</div>
<div class="t" style="left:727.07px;top:793px;font-size:9.50px;line-height:9.50px;font-family:'Liberation Mono', monospace;font-weight:normal;color:#8f8f8f;transform:scaleX(1.0209);">G1 Z30</div>
<svg style="left:715px;top:780px" width="16" height="30"><path d="M12 4.5H6.7V21" stroke="#777" stroke-width="1.4" fill="none"/><path d="M3.5 19.5H10L6.7 24.5Z" fill="#666"/></svg>
<svg style="left:842px;top:772px" width="24" height="26"><path d="M14 3.5H4.5V21.5H12" stroke="#ee0000" stroke-width="1.3" fill="none"/><path d="M11 19L14.5 21.5L11 24Z" fill="#ee0000"/><path d="M20.3 6L16 19.8" stroke="#000" stroke-width="2.2"/></svg>
<svg style="left:945px;top:768px" width="48" height="38"><defs><linearGradient id="fsg" x1="0" y1="0" x2="0" y2="1"><stop offset="0" stop-color="#ffffff"/><stop offset="1" stop-color="#dfe3ea"/></linearGradient><linearGradient id="fsa" x1="0" y1="0" x2="1" y2="1"><stop offset="0" stop-color="#88cc55"/><stop offset="1" stop-color="#2a7a1a"/></linearGradient></defs><rect x="2.5" y="2.8" width="41" height="31.5" rx="2" fill="url(#fsg)" stroke="#a9adb5" stroke-width="1.4"/><rect x="3.2" y="3.5" width="39.6" height="3.5" fill="#c8ccd2"/><g fill="url(#fsa)"><path d="M4.5 8.5L11.5 9L9.8 10.8L14 15L11.5 17.5L7.3 13.3L5.5 15Z"/><path d="M41.5 8.5L34.5 9L36.2 10.8L32 15L34.5 17.5L38.7 13.3L40.5 15Z"/><path d="M4.5 32L11.5 31.5L9.8 29.7L14 25.5L11.5 23L7.3 27.2L5.5 25.5Z"/><path d="M41.5 32L34.5 31.5L36.2 29.7L32 25.5L34.5 23L38.7 27.2L40.5 25.5Z"/></g></svg>
<svg style="left:1058px;top:768px" width="50" height="42"><ellipse cx="35" cy="30" rx="8" ry="2" fill="#e0e0e0"/><path d="M6 4.5H40L42 37H4Z" fill="#f8f8f8" stroke="#3a3a3a" stroke-width="0.8"/><rect x="4.5" y="32" width="37" height="4.5" fill="#dcdfd9"/><path d="M4 37.5H42" stroke="#d07a10" stroke-width="1.4"/><ellipse cx="9.5" cy="4.2" rx="1.5" ry="2.6" fill="none" stroke="#3a3a3a" stroke-width="0.9"/><ellipse cx="13.6" cy="4.2" rx="1.5" ry="2.6" fill="none" stroke="#3a3a3a" stroke-width="0.9"/><ellipse cx="17.7" cy="4.2" rx="1.5" ry="2.6" fill="none" stroke="#3a3a3a" stroke-width="0.9"/><ellipse cx="21.8" cy="4.2" rx="1.5" ry="2.6" fill="none" stroke="#3a3a3a" stroke-width="0.9"/><ellipse cx="25.9" cy="4.2" rx="1.5" ry="2.6" fill="none" stroke="#3a3a3a" stroke-width="0.9"/><ellipse cx="30.0" cy="4.2" rx="1.5" ry="2.6" fill="none" stroke="#3a3a3a" stroke-width="0.9"/><ellipse cx="34.1" cy="4.2" rx="1.5" ry="2.6" fill="none" stroke="#3a3a3a" stroke-width="0.9"/><ellipse cx="38.2" cy="4.2" rx="1.5" ry="2.6" fill="none" stroke="#3a3a3a" stroke-width="0.9"/><g stroke="#aaa" stroke-width="0.9"><path d="M8 9.5H14M15.5 9.5H18M19.5 9.5H26M28 9.5H30M31.5 9.5H36M8 11.5H11M12 11.5H15M16 11.5H18M19 11.5H22M8 14.5H15M17 14.5H21M22 14.5H25M8 16.5H11M12 16.5H14M15 16.5H20M22 16.5H24M8 19.5H10M11 19.5H15M16 19.5H18M8 24.5H10M11 24.5H14M15.5 24.5H19M27 24.5H33M8 27.5H12M13 27.5H17M18 27.5H20"/></g><path d="M23.5 29L27 22L43.5 7.5Q46.5 7.5 46.5 10.5L30 25Z" fill="#f5a83a" stroke="#c0600a" stroke-width="1.1" stroke-linejoin="round"/><path d="M26.5 23.5L43.5 8.8" stroke="#ffd080" stroke-width="1.2"/><path d="M23.5 29L25 25.5L27.3 27.3Z" fill="#222"/><path d="M25 25.5L27 22L30 25L27.3 27.3Z" fill="#fae3c0"/></svg>
<div class="t" style="left:1051.09px;top:713px;font-size:14.25px;line-height:14.25px;font-family:'Liberation Sans', sans-serif;font-weight:normal;color:#8f9294;transform:scaleX(1.0380);">12:31:39</div>
<div class="t" style="left:1043.51px;top:730px;font-size:14.50px;line-height:14.50px;font-family:'Liberation Sans', sans-serif;font-weight:normal;color:#8f9294;transform:scaleX(1.0034);">19.10.2022</div>
<div style="position:absolute;left:0px;top:819px;width:1145px;height:95px;background:#f6f5f4;border-radius:7px 7px 0 0;border-right:1px solid #c9c5c1;"></div>
<div style="position:absolute;left:0px;top:819px;width:1145px;height:28px;background:linear-gradient(#c8c8c8,#d8d8d8 15%,#e4e4e4 40%,#ebebea 65%,#e8e8e7);border-radius:6px 6px 0 0;"></div>
<div style="position:absolute;left:5px;top:824px;width:20px;height:18px;background:linear-gradient(#ffffff,#dfe3df);border:1px solid #9da0a3;border-top:3px solid #4a77b9;"></div>
<div class="t" style="left:497.69px;top:826px;font-size:14.00px;line-height:14.00px;font-family:'Liberation Sans', sans-serif;font-weight:bold;color:#8a8c8e;transform:scaleX(1.0339);text-shadow:0 1px 0 #fff;">h_buttonlist</div>
<svg style="left:1056px;top:828px" width="80" height="12"><path d="M5 9V2M1.5 5.5L5 2L8.5 5.5" stroke="#a9a9a9" stroke-width="2" fill="none"/><rect x="24" y="7" width="6" height="2.2" fill="#a9a9a9"/><rect x="45.8" y="1.8" width="7.2" height="7.2" stroke="#a9a9a9" stroke-width="1.6" fill="none"/><path d="M67 1.5L75.5 10M75.5 1.5L67 10" stroke="#a9a9a9" stroke-width="1.9"/></svg>
<div style="position:absolute;left:3px;top:851px;width:113px;height:56px;background:#f6f5f4;border:1px solid #d9d4d0;border-radius:6px;"></div>
<div class="t" style="left:22.57px;top:872px;font-size:13.50px;line-height:13.50px;font-family:'Liberation Sans', sans-serif;font-weight:normal;color:#929596;transform:scaleX(1.0860);">h_button_0</div>
<div style="position:absolute;left:117px;top:851px;width:113px;height:56px;background:#f6f5f4;border:1px solid #d9d4d0;border-radius:6px;"></div>
<div class="t" style="left:136.57px;top:872px;font-size:13.50px;line-height:13.50px;font-family:'Liberation Sans', sans-serif;font-weight:normal;color:#929596;transform:scaleX(1.0882);">h_button_1</div>
<div style="position:absolute;left:231px;top:851px;width:113px;height:56px;background:#f6f5f4;border:1px solid #d9d4d0;border-radius:6px;"></div>
<div class="t" style="left:250.57px;top:872px;font-size:13.50px;line-height:13.50px;font-family:'Liberation Sans', sans-serif;font-weight:normal;color:#929596;transform:scaleX(1.0887);">h_button_2</div>
<div style="position:absolute;left:345px;top:851px;width:113px;height:56px;background:#f6f5f4;border:1px solid #d9d4d0;border-radius:6px;"></div>
<div class="t" style="left:364.57px;top:872px;font-size:13.50px;line-height:13.50px;font-family:'Liberation Sans', sans-serif;font-weight:normal;color:#929596;transform:scaleX(1.0871);">h_button_3</div>
<div style="position:absolute;left:459px;top:851px;width:113px;height:56px;background:#f6f5f4;border:1px solid #d9d4d0;border-radius:6px;"></div>
<div class="t" style="left:478.58px;top:872px;font-size:13.50px;line-height:13.50px;font-family:'Liberation Sans', sans-serif;font-weight:normal;color:#929596;transform:scaleX(1.0838);">h_button_4</div>
<div style="position:absolute;left:573px;top:851px;width:113px;height:56px;background:#f6f5f4;border:1px solid #d9d4d0;border-radius:6px;"></div>
<div class="t" style="left:592.57px;top:872px;font-size:13.50px;line-height:13.50px;font-family:'Liberation Sans', sans-serif;font-weight:normal;color:#929596;transform:scaleX(1.0865);">h_button_5</div>
<div style="position:absolute;left:687px;top:851px;width:113px;height:56px;background:#f6f5f4;border:1px solid #d9d4d0;border-radius:6px;"></div>
<div class="t" style="left:706.57px;top:872px;font-size:13.50px;line-height:13.50px;font-family:'Liberation Sans', sans-serif;font-weight:normal;color:#929596;transform:scaleX(1.0871);">h_button_6</div>
<div style="position:absolute;left:801px;top:851px;width:113px;height:56px;background:#f6f5f4;border:1px solid #d9d4d0;border-radius:6px;"></div>
<div class="t" style="left:820.57px;top:872px;font-size:13.50px;line-height:13.50px;font-family:'Liberation Sans', sans-serif;font-weight:normal;color:#929596;transform:scaleX(1.0887);">h_button_7</div>
<div style="position:absolute;left:915px;top:851px;width:113px;height:56px;background:#f6f5f4;border:1px solid #d9d4d0;border-radius:6px;"></div>
<div class="t" style="left:934.57px;top:872px;font-size:13.50px;line-height:13.50px;font-family:'Liberation Sans', sans-serif;font-weight:normal;color:#929596;transform:scaleX(1.0871);">h_button_8</div>
<div style="position:absolute;left:1029px;top:851px;width:113px;height:56px;background:#f6f5f4;border:1px solid #d9d4d0;border-radius:6px;"></div>
<div class="t" style="left:1048.57px;top:872px;font-size:13.50px;line-height:13.50px;font-family:'Liberation Sans', sans-serif;font-weight:normal;color:#929596;transform:scaleX(1.0876);">h_button_9</div>
<div style="position:absolute;left:0px;top:912px;width:1145px;height:2px;background:#b7b7b7;"></div>
</body></html>
